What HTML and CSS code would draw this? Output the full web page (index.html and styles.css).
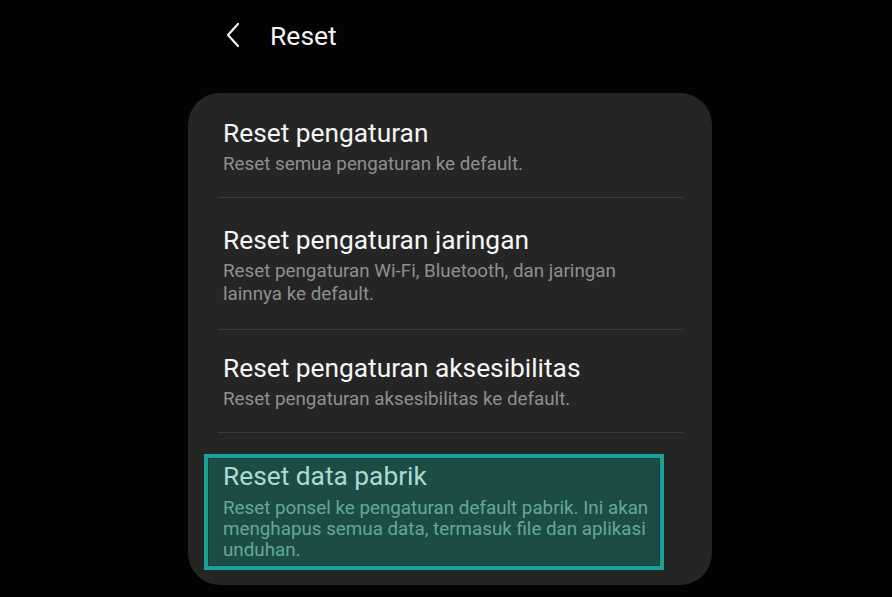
FILE: index.html
```html
<!DOCTYPE html>
<html lang="id">
<head>
<meta charset="utf-8">
<title>Reset</title>
<link rel="stylesheet" href="styles.css">
</head>
<body>
<div class="screen">
  <header class="appbar">
    <span class="back" aria-label="Kembali">
      <svg width="16" height="26" viewBox="0 0 16 26"><path d="M13 2 L3 13 L13 24" fill="none" stroke="#f2f2f2" stroke-width="2.2" stroke-linecap="round" stroke-linejoin="round"/></svg>
    </span>
    <h1 class="title">Reset</h1>
  </header>
  <section class="card">
    <div class="item first">
      <div class="item-title">Reset pengaturan</div>
      <div class="item-sub">Reset semua pengaturan ke default.</div>
    </div>
    <div class="divider"></div>
    <div class="item">
      <div class="item-title">Reset pengaturan jaringan</div>
      <div class="item-sub">Reset pengaturan Wi-Fi, Bluetooth, dan jaringan lainnya ke default.</div>
    </div>
    <div class="divider"></div>
    <div class="item third">
      <div class="item-title">Reset pengaturan aksesibilitas</div>
      <div class="item-sub">Reset pengaturan aksesibilitas ke default.</div>
    </div>
    <div class="divider"></div>
    <div class="item last">
      <div class="highlight">
        <div class="item-title">Reset data pabrik</div>
        <div class="item-sub">Reset ponsel ke pengaturan default pabrik. Ini akan menghapus semua data, termasuk file dan aplikasi unduhan.</div>
      </div>
    </div>
  </section>
</div>
</body>
</html>
```
FILE: styles.css
```css
* { box-sizing: border-box; }
html, body {
  margin: 0;
  padding: 0;
  background: #030303;
}
body {
  width: 892px;
  height: 597px;
  overflow: hidden;
  font-family: Roboto, "Noto Sans", "Liberation Sans", sans-serif;
}
.screen {
  padding-left: 188px;
}
.appbar {
  height: 93px;
  display: flex;
  align-items: flex-start;
  padding-top: 22px;
  padding-left: 37px;
}
.back {
  display: flex;
  width: 16px;
  height: 26px;
}
.title {
  margin: 0 0 0 29px;
  font-size: 26.5px;
  font-weight: 400;
  line-height: 28px;
  color: #f4f4f4;
}
.card {
  width: 524px;
  height: 492px;
  background: #252525;
  border-radius: 32px;
  display: flex;
  flex-direction: column;
}
.item {
  padding: 27px 49px 23px 35px;
}
.item.first { padding-top: 25px; padding-bottom: 21px; }
.item.third { padding-top: 23px; padding-bottom: 21px; }
.item.last { padding: 21px 48px 0 16px; }
.item-title {
  font-size: 26.3px;
  line-height: 30px;
  color: #f5f5f5;
}
.item-sub {
  margin-top: 5px;
  font-size: 18.8px;
  line-height: 23px;
  color: #8f8f8f;
}
.divider {
  height: 1px;
  margin: 0 29px 0 30px;
  background: #3a3a3a;
}
.highlight {
  border: 4px solid #15a596;
  box-shadow: inset 0 0 0 1px #123d38;
  background: #1b4c46;
  padding: 3px 8px 5px 15px;
}
.highlight .item-title { color: #a9dccf; }
.highlight .item-sub {
  color: #66a797;
  line-height: 21px;
  margin-top: 7px;
}
```
